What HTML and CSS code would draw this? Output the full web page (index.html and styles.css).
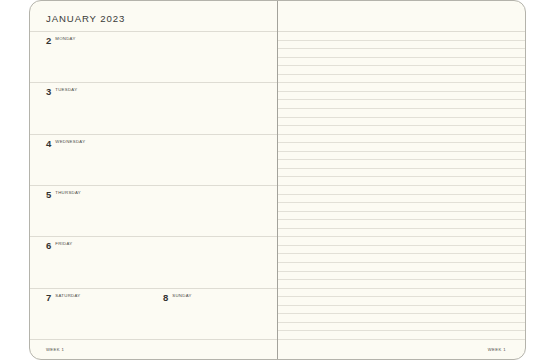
FILE: index.html
```html
<!DOCTYPE html>
<html>
<head>
<meta charset="utf-8">
<link rel="stylesheet" href="styles.css">
</head>
<body>
<div class="book">
  <section class="page left">
    <header class="head"><h1 class="month">JANUARY 2023</h1></header>
    <div class="days">
      <div class="day"><span class="num">2</span><span class="dname">MONDAY</span></div>
      <div class="day"><span class="num">3</span><span class="dname">TUESDAY</span></div>
      <div class="day"><span class="num">4</span><span class="dname">WEDNESDAY</span></div>
      <div class="day"><span class="num">5</span><span class="dname">THURSDAY</span></div>
      <div class="day"><span class="num">6</span><span class="dname">FRIDAY</span></div>
      <div class="day weekend">
        <div class="half"><span class="num">7</span><span class="dname">SATURDAY</span></div>
        <div class="half"><span class="num">8</span><span class="dname">SUNDAY</span></div>
      </div>
    </div>
    <footer class="foot"><span class="week">WEEK 1</span></footer>
  </section>
  <section class="page right">
    <header class="head"></header>
    <div class="ruled"></div>
    <footer class="foot foot-right"><span class="week">WEEK 1</span></footer>
  </section>
</div>
</body>
</html>
```
FILE: styles.css
```css
* { box-sizing: border-box; }
html, body { margin: 0; padding: 0; background: #ffffff; }
body {
  font-family: "Liberation Sans", Arial, sans-serif;
  color: #3a3a38;
}
.book {
  margin-left: 29px;
  width: 497px;
  height: 360px;
  border: 1px solid #b4b3ab;
  border-radius: 12px;
  background: #fcfbf3;
  display: grid;
  grid-template-columns: 248px 1fr;
  overflow: hidden;
}
.page {
  display: flex;
  flex-direction: column;
  height: 358px;
}
.page.left { border-right: 1px solid #a3a29b; }
.head {
  height: 31px;
  border-bottom: 1px solid #dedcd3;
  flex: none;
  padding: 13px 0 0 16px;
}
.month {
  margin: 0;
  font-size: 9.6px;
  font-weight: normal;
  letter-spacing: 0.9px;
  line-height: 9px;
  color: #3a3a38;
}
.days {
  height: 308px;
  display: flex;
  flex-direction: column;
  flex: none;
}
.day {
  height: 51.333px;
  border-bottom: 1px solid #dedcd3;
  padding: 4px 0 0 16px;
  display: flex;
  align-items: flex-start;
}
.weekend {
  display: grid;
  grid-template-columns: 117px 1fr;
  padding-left: 16px;
}
.half { display: flex; align-items: flex-start; }
.num {
  font-size: 9.5px;
  font-weight: bold;
  line-height: 10px;
  color: #333331;
}
.dname {
  font-size: 4.3px;
  line-height: 5px;
  letter-spacing: 0.3px;
  margin-left: 4px;
  color: #4a4a47;
}
.foot {
  flex: 1;
  display: flex;
  align-items: flex-start;
  padding: 7px 0 0 16px;
}
.foot-right {
  justify-content: flex-end;
  padding: 7px 19px 0 0;
}
.week {
  font-size: 4.2px;
  letter-spacing: 0.4px;
  line-height: 5px;
  color: #4a4a47;
  display: block;
}
.ruled {
  height: 308px;
  flex: none;
  background: repeating-linear-gradient(
    to bottom,
    transparent 0,
    transparent calc(51.333px / 6 - 1px),
    #e2e0d7 calc(51.333px / 6 - 1px),
    #e2e0d7 calc(51.333px / 6)
  );
}
```
